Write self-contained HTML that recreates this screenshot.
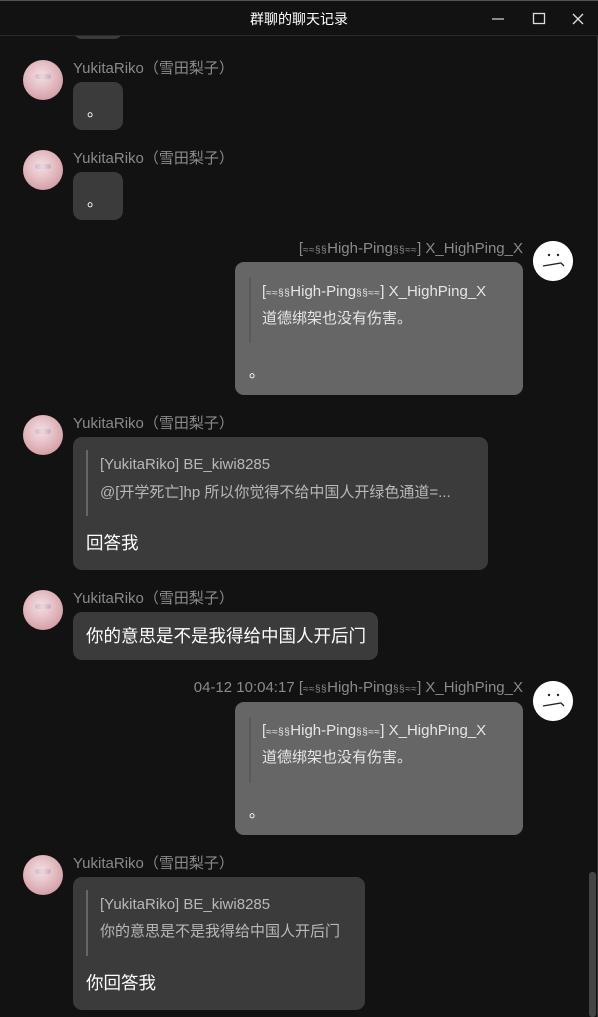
<!DOCTYPE html>
<html><head><meta charset="utf-8">
<style>
*{margin:0;padding:0;box-sizing:border-box}
body{width:598px;height:1017px;background:#121212;position:relative;overflow:hidden;font-family:"Liberation Sans","Noto Sans CJK SC",sans-serif;}
.abs{position:absolute}
.title{left:0;top:0;width:598px;height:36px;border-top:1px solid #555;border-bottom:1px solid #2a2a2a;background:#121212;z-index:5}
.title .t{position:absolute;left:0;right:0;top:8px;text-align:center;color:#fff;font-size:14px}
.av{position:absolute;width:40px;height:40px;border-radius:50%;background:radial-gradient(circle at 45% 40%,#f3dfe3 0,#e6c3c8 35%,#d7a3ab 70%,#c98f98 100%);overflow:hidden}
.av:after{content:"";position:absolute;left:12px;top:14px;width:16px;height:5px;background:linear-gradient(90deg,#b9a0c8,#e8d0d5,#9e8ab8);border-radius:3px;opacity:.5}
.fa{position:absolute;width:40px;height:40px;border-radius:50%;background:#fff}
.name{position:absolute;color:#8a8a8a;font-size:15px;white-space:nowrap;line-height:18px}
.b{position:absolute;border-radius:9px;background:#3b3b3b}
.b2{position:absolute;border-radius:9px;background:#666}
.dot{position:absolute;color:#fff;font-size:16px;line-height:16px}
.q{position:absolute;border-left:2px solid #555;}
.qt{position:absolute;font-size:15px;white-space:nowrap;line-height:18px}
.txt{position:absolute;color:#fff;font-size:17.5px;white-space:nowrap;line-height:20px}
.sm{font-size:10px;letter-spacing:0.5px}
</style></head><body>
<div class="abs title"><div class="t">群聊的聊天记录</div>
<svg class="abs" style="left:490px;top:10px" width="96" height="16"><line x1="2" y1="8" x2="14" y2="8" stroke="#ccc" stroke-width="1.3"/><rect x="43.5" y="2.5" width="11" height="10" fill="none" stroke="#ddd" stroke-width="1.3"/><line x1="83" y1="3" x2="93" y2="13" stroke="#ddd" stroke-width="1.3"/><line x1="93" y1="3" x2="83" y2="13" stroke="#ddd" stroke-width="1.3"/></svg>
</div>
<div class="abs" style="left:597px;top:0;width:1px;height:1017px;background:#333"></div>
<div class="abs" style="left:589px;top:872px;width:7px;height:145px;background:#454545;border-radius:3px"></div>

<div class="b" style="left:73px;top:10px;width:50px;height:29px"></div>

<div class="av" style="left:23px;top:60px"></div>
<div class="name" style="left:73px;top:60px">YukitaRiko（雪田梨子）</div>
<div class="b" style="left:73px;top:82px;width:50px;height:48px"></div>
<div class="dot" style="left:87px;top:104px">。</div>

<div class="av" style="left:23px;top:150px"></div>
<div class="name" style="left:73px;top:150px">YukitaRiko（雪田梨子）</div>
<div class="b" style="left:73px;top:172px;width:50px;height:48px"></div>
<div class="dot" style="left:87px;top:194px">。</div>

<div class="name" style="right:75px;top:240px">[<span class="sm">≈≈§§</span>High-Ping<span class="sm">§§≈≈</span>] X_HighPing_X</div>
<svg class="fa" style="left:533px;top:241px" viewBox="0 0 40 40"><circle cx="20" cy="20" r="20" fill="#fff"/><circle cx="16" cy="14" r="1.2" fill="#222"/><circle cx="25" cy="14" r="1.2" fill="#222"/><path d="M10 25 L28 22 L31 25" stroke="#222" stroke-width="1.3" fill="none"/></svg>
<div class="b2" style="left:235px;top:262px;width:288px;height:133px"></div>
<div class="q" style="left:249px;top:277px;height:66px;border-color:#5a5a5a"></div>
<div class="qt" style="left:262px;top:283px;color:#e6e6e6">[<span class="sm">≈≈§§</span>High-Ping<span class="sm">§§≈≈</span>] X_HighPing_X</div>
<div class="qt" style="left:262px;top:310px;color:#e6e6e6">道德绑架也没有伤害。</div>
<div class="dot" style="left:249px;top:365px">。</div>

<div class="av" style="left:23px;top:415px"></div>
<div class="name" style="left:73px;top:415px">YukitaRiko（雪田梨子）</div>
<div class="b" style="left:73px;top:437px;width:415px;height:133px"></div>
<div class="q" style="left:86px;top:450px;height:66px;border-color:#666"></div>
<div class="qt" style="left:100px;top:456px;color:#b8b8b8">[YukitaRiko] BE_kiwi8285</div>
<div class="qt" style="left:100px;top:484px;color:#b8b8b8">@[开学死亡]hp 所以你觉得不给中国人开绿色通道=...</div>
<div class="txt" style="left:86px;top:533px">回答我</div>

<div class="av" style="left:23px;top:590px"></div>
<div class="name" style="left:73px;top:590px">YukitaRiko（雪田梨子）</div>
<div class="b" style="left:73px;top:612px;width:305px;height:48px"></div>
<div class="txt" style="left:86px;top:626px">你的意思是不是我得给中国人开后门</div>

<div class="name" style="right:75px;top:679px">04-12 10:04:17 [<span class="sm">≈≈§§</span>High-Ping<span class="sm">§§≈≈</span>] X_HighPing_X</div>
<svg class="fa" style="left:533px;top:681px" viewBox="0 0 40 40"><circle cx="20" cy="20" r="20" fill="#fff"/><circle cx="16" cy="14" r="1.2" fill="#222"/><circle cx="25" cy="14" r="1.2" fill="#222"/><path d="M10 25 L28 22 L31 25" stroke="#222" stroke-width="1.3" fill="none"/></svg>
<div class="b2" style="left:235px;top:702px;width:288px;height:133px"></div>
<div class="q" style="left:249px;top:717px;height:66px;border-color:#5a5a5a"></div>
<div class="qt" style="left:262px;top:722px;color:#e6e6e6">[<span class="sm">≈≈§§</span>High-Ping<span class="sm">§§≈≈</span>] X_HighPing_X</div>
<div class="qt" style="left:262px;top:749px;color:#e6e6e6">道德绑架也没有伤害。</div>
<div class="dot" style="left:249px;top:805px">。</div>

<div class="av" style="left:23px;top:855px"></div>
<div class="name" style="left:73px;top:855px">YukitaRiko（雪田梨子）</div>
<div class="b" style="left:73px;top:877px;width:292px;height:133px"></div>
<div class="q" style="left:86px;top:890px;height:66px;border-color:#666"></div>
<div class="qt" style="left:100px;top:896px;color:#b8b8b8">[YukitaRiko] BE_kiwi8285</div>
<div class="qt" style="left:100px;top:923px;color:#b8b8b8">你的意思是不是我得给中国人开后门</div>
<div class="txt" style="left:86px;top:973px">你回答我</div>
</body></html>
